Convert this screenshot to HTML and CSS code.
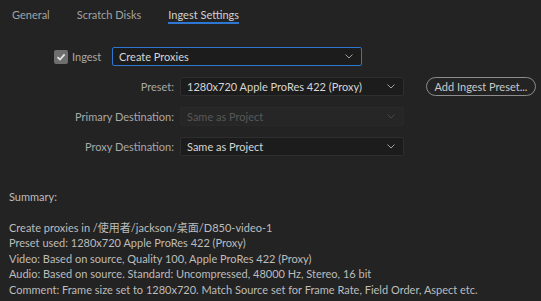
FILE: index.html
```html
<!DOCTYPE html>
<html lang="en">
<head>
  <meta charset="UTF-8" />
  <title>Ingest Settings</title>
  <link rel="stylesheet" href="styles.css">
</head>
<body>
  <div class="panel">
    <nav class="tabs">
      <span class="tab">General</span>
      <span class="tab">Scratch Disks</span>
      <span class="tab active">Ingest Settings</span>
    </nav>

    <div class="ingest-row">
      <label class="check">
        <span class="box">
          <svg width="10" height="10" viewBox="0 0 10 10"><path d="M1.5 5.2 L4 7.6 L8.6 2.4" fill="none" stroke="#e6e6e6" stroke-width="1.7"/></svg>
        </span>
        Ingest
      </label>
      <div class="select focus">
        <span>Create Proxies</span>
        <svg class="chev" width="8" height="5" viewBox="0 0 8 5"><path d="M0.5 0.5 L4 4 L7.5 0.5" fill="none" stroke="currentColor" stroke-width="1"/></svg>
      </div>
    </div>

    <div class="form">
      <div class="label">Preset:</div>
      <div class="select">
        <span>1280x720 Apple ProRes 422 (Proxy)</span>
        <svg class="chev" width="8" height="5" viewBox="0 0 8 5"><path d="M0.5 0.5 L4 4 L7.5 0.5" fill="none" stroke="currentColor" stroke-width="1"/></svg>
      </div>
      <button class="pill">Add Ingest Preset...</button>

      <div class="label">Primary Destination:</div>
      <div class="select disabled">
        <span>Same as Project</span>
        <svg class="chev" width="8" height="5" viewBox="0 0 8 5"><path d="M0.5 0.5 L4 4 L7.5 0.5" fill="none" stroke="currentColor" stroke-width="1"/></svg>
      </div>
      <div></div>

      <div class="label">Proxy Destination:</div>
      <div class="select">
        <span>Same as Project</span>
        <svg class="chev" width="8" height="5" viewBox="0 0 8 5"><path d="M0.5 0.5 L4 4 L7.5 0.5" fill="none" stroke="currentColor" stroke-width="1"/></svg>
      </div>
      <div></div>
    </div>

    <div class="summary">
      <p class="summary-title">Summary:</p>
      <p>Create proxies in /使用者/jackson/桌面/D850-video-1</p>
      <p>Preset used: 1280x720 Apple ProRes 422 (Proxy)</p>
      <p>Video: Based on source, Quality 100, Apple ProRes 422 (Proxy)</p>
      <p>Audio: Based on source. Standard: Uncompressed, 48000 Hz, Stereo, 16 bit</p>
      <p>Comment: Frame size set to 1280x720. Match Source set for Frame Rate, Field Order, Aspect etc.</p>
    </div>
  </div>
</body>
</html>
```

FILE: styles.css
```css
* {
    box-sizing: border-box;
    margin: 0;
    padding: 0;
}
body {
    background: #232323;
    font-family: 'Lato', 'Noto Sans CJK SC', sans-serif;
    font-size: 11px;
    color: #c4c4c4;
    width: 541px;
    height: 301px;
    overflow: hidden;
}

.panel {
    padding: 7px 0 0 0;
}

.tabs {
    display: flex;
    gap: 27px;
    padding-left: 12px;
    height: 17px;
}

.tab {
    color: #a2a2a2;
    line-height: 15px;
}

.tab.active {
    color: #d2d2d2;
    border-bottom: 2px solid #2d76d2;
}

.ingest-row {
    display: flex;
    align-items: center;
    margin-top: 23px;
    padding-left: 54px;
}

.check {
    display: flex;
    align-items: center;
    gap: 4px;
    color: #a8a8a8;
    width: 58px;
}

.box {
    width: 14px;
    height: 14px;
    background: #6e6e6e;
    border-radius: 2px;
    display: flex;
    align-items: center;
    justify-content: center;
}

.select {
    display: flex;
    align-items: center;
    justify-content: space-between;
    height: 19px;
    padding: 0 8px 0 6px;
    background: #1c1c1c;
    border: 1px solid #2e2e2e;
    border-radius: 2px;
    color: #d6d6d6;
}

.select.focus {
    width: 250px;
    border-color: #2d76d2;
}

.select.disabled {
    background: #262626;
    border-color: #292929;
    color: #585858;
}

.chev {
    color: #a0a0a0;
}

.select.disabled .chev {
    color: #484848;
}

.form {
    display: grid;
    grid-template-columns: 174px 224px 110px;
    column-gap: 6px;
    row-gap: 11px;
    margin-top: 11px;
    align-items: center;
}

.form .pill {
    margin-left: 16px;
}

.label {
    text-align: right;
    color: #a8a8a8;
}

.pill {
    height: 19px;
    background: transparent;
    border: 1px solid #8c8c8c;
    border-radius: 10px;
    color: #c8c8c8;
    font-family: inherit;
    font-size: 11px;
    width: 110px;
}

.summary {
    margin-top: 33px;
    padding-left: 9px;
    line-height: 15.5px;
    color: #bcbcbc;
}

.summary-title {
    margin-bottom: 15px;
}
```
